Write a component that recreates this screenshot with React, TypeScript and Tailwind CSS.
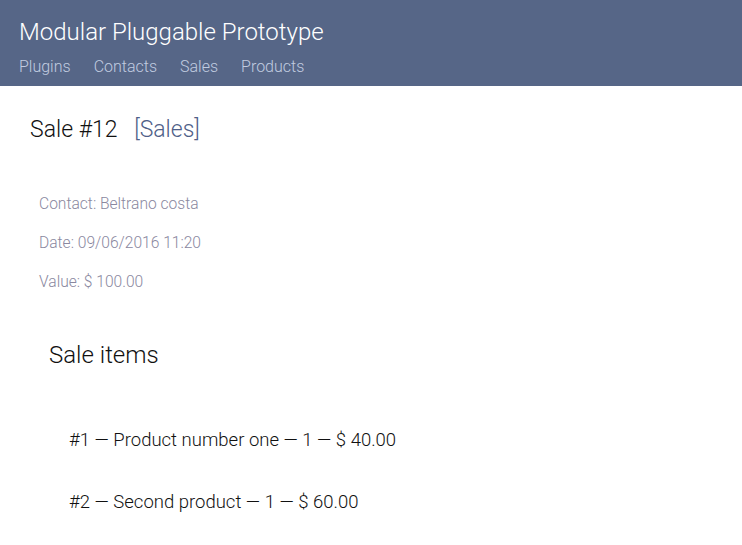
import React from 'react';

type Item = { id: number; name: string; qty: number; price: string };

const items: Item[] = [
  { id: 1, name: 'Product number one', qty: 1, price: '$ 40.00' },
  { id: 2, name: 'Second product', qty: 1, price: '$ 60.00' },
];

const navLinks = ['Plugins', 'Contacts', 'Sales', 'Products'];

export default function App() {
  return (
    <div className="min-h-screen bg-white font-['Roboto',sans-serif] font-light">
      <header className="h-[86px] bg-[#566687] px-[19px] pt-[16px]">
        <h1 className="text-[24px] leading-[32px] text-white">Modular Pluggable Prototype</h1>
        <nav className="mt-[9px] flex gap-[23px] text-[16px] leading-[20px] text-[#c1cce0]">
          {navLinks.map(link => (
            <a key={link} href="#">{link}</a>
          ))}
        </nav>
      </header>

      <main className="px-[30px] pt-[30px]">
        <h2 className="text-[23px] leading-[28px] text-[#111]">
          Sale #12 <span className="ml-[11px] text-[#4f6088]">[Sales]</span>
        </h2>

        <div className="mt-[50px] flex flex-col gap-[19px] pl-[9px] text-[15.6px] leading-[20px] text-[#8a88a0]">
          <p>Contact: Beltrano costa</p>
          <p>Date: 09/06/2016 11:20</p>
          <p>Value: $ 100.00</p>
        </div>

        <h3 className="mt-[49px] pl-[19px] text-[24px] leading-[28px] text-[#111]">Sale items</h3>

        <ul className="mt-[60px] flex flex-col gap-[40px] pl-[39px] text-[18.5px] leading-[22px] text-[#111]">
          {items.map(item => (
            <li key={item.id}>
              #{item.id} — {item.name} — {item.qty} — {item.price}
            </li>
          ))}
        </ul>
      </main>
    </div>
  );
}
